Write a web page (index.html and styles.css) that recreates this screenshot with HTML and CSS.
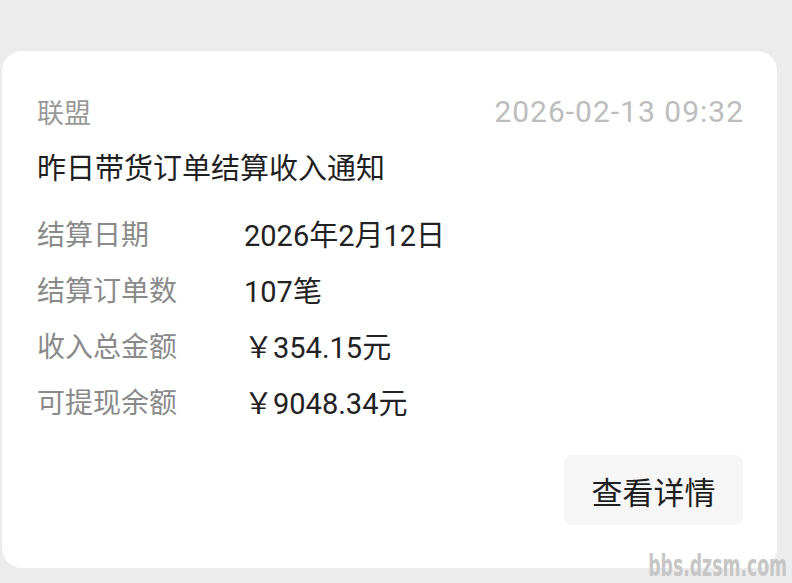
FILE: index.html
```html
<!DOCTYPE html>
<html lang="zh-CN">
<head>
<meta charset="utf-8">
<link rel="stylesheet" href="styles.css">
</head>
<body>
<div class="card">
  <div class="header">
    <span class="source">联盟</span>
    <span class="time">2026-02-13 09:32</span>
  </div>
  <div class="title">昨日带货订单结算收入通知</div>
  <div class="rows">
    <div class="row"><span class="label">结算日期</span><span class="value">2026年2月12日</span></div>
    <div class="row"><span class="label">结算订单数</span><span class="value">107笔</span></div>
    <div class="row"><span class="label">收入总金额</span><span class="value">￥354.15元</span></div>
    <div class="row"><span class="label">可提现余额</span><span class="value">￥9048.34元</span></div>
  </div>
  <div class="actions">
    <div class="btn">查看详情</div>
  </div>
</div>
<div class="watermark">bbs.dzsm.com</div>
</body>
</html>
```
FILE: styles.css
```css
html, body {
  margin: 0;
  padding: 0;
}
body {
  width: 792px;
  height: 583px;
  background: #ececec;
  font-family: "Noto Sans CJK SC", "Noto Sans", sans-serif;
  position: relative;
  overflow: hidden;
}
.card {
  box-sizing: border-box;
  margin: 51px 0 0 2px;
  width: 775px;
  height: 517px;
  background: #ffffff;
  border-radius: 20px;
  padding: 43px 34px 0 35px;
}
.header {
  display: flex;
  justify-content: space-between;
  align-items: center;
  height: 36px;
}
.source {
  font-size: 27px;
  color: #999999;
  line-height: 36px;
}
.time {
  font-family: Roboto, "Noto Sans CJK SC", sans-serif;
  font-size: 30px;
  color: #bdbdbd;
  line-height: 36px;
  letter-spacing: 1px;
  margin-right: -1px;
}
.title {
  margin-top: 16px;
  font-size: 29px;
  line-height: 40px;
  color: #1f1f1f;
}
.rows {
  margin-top: 19px;
}
.row {
  display: flex;
  height: 56px;
  align-items: center;
  font-size: 28px;
}
.label {
  width: 207px;
  color: #8a8a8a;
}
.value {
  font-family: Roboto, "Noto Sans CJK SC", sans-serif;
  font-size: 29px;
  color: #222222;
}
.actions {
  display: flex;
  justify-content: flex-end;
  margin-top: 26px;
}
.btn {
  width: 179px;
  height: 70px;
  border-radius: 8px;
  background: #f6f6f6;
  display: flex;
  align-items: center;
  justify-content: center;
  font-size: 31px;
  color: #1f1f1f;
}
.watermark {
  position: absolute;
  right: 5px;
  bottom: 1px;
  font-family: "DejaVu Sans Condensed", "DejaVu Sans", sans-serif;
  font-weight: bold;
  font-size: 30px;
  line-height: 32px;
  color: #c6c6c6;
  transform: scaleX(0.64);
  transform-origin: right center;
}
```
